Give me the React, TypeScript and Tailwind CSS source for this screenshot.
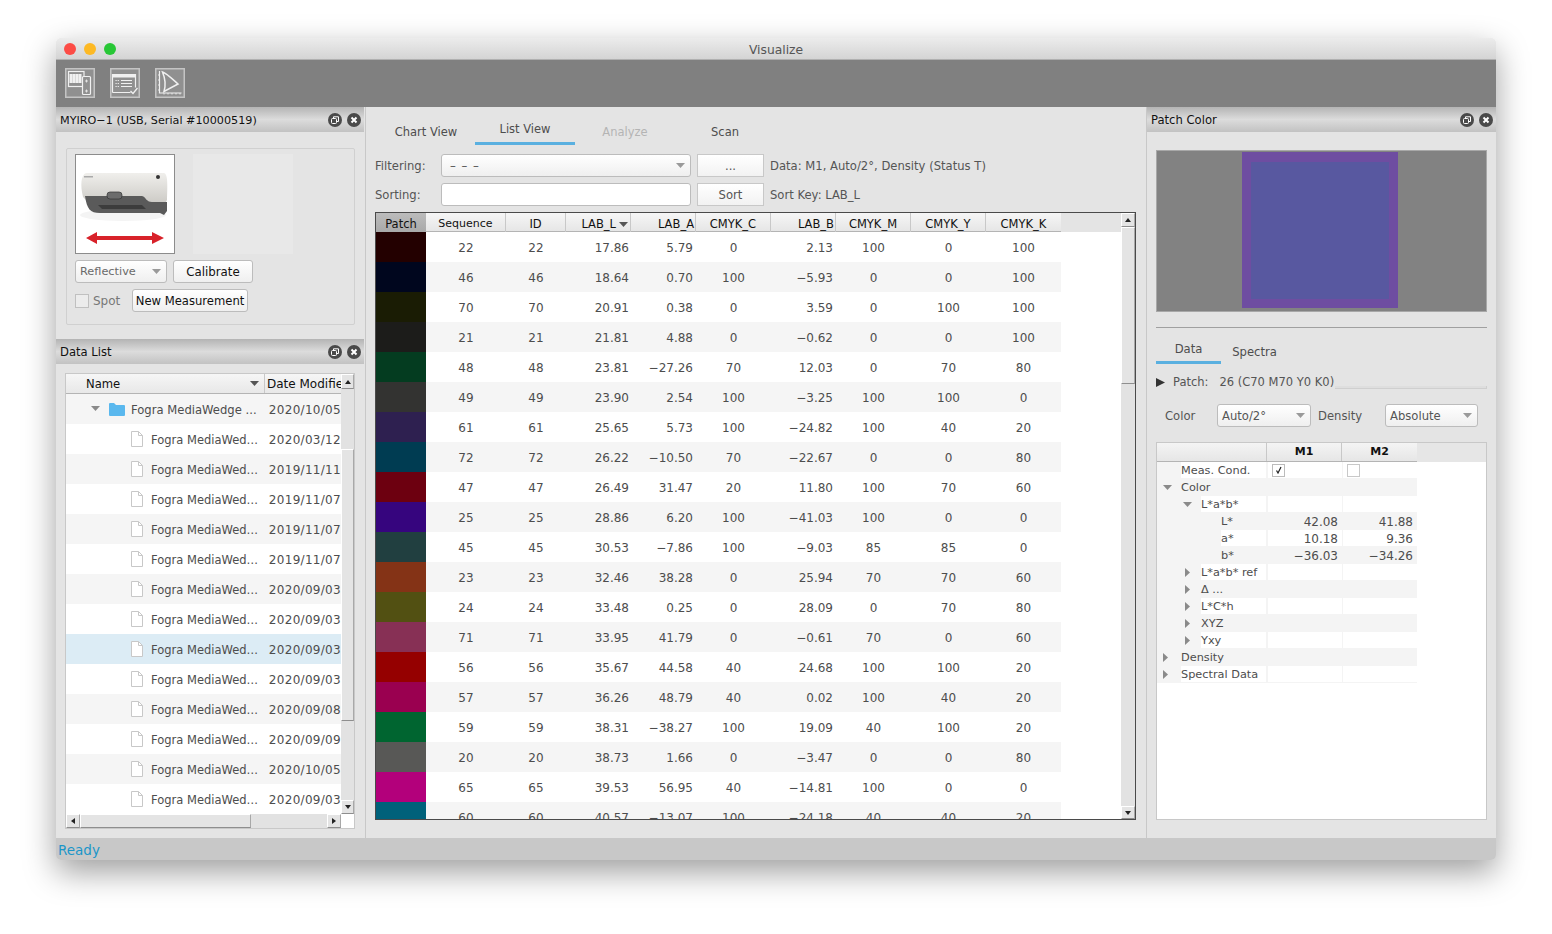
import React from "react";

const FONT = "[font-family:'DejaVu_Sans',sans-serif]";

const rows: string[][] = [
  ["#230000","22","22","17.86","5.79","0","2.13","100","0","100"],
  ["#00061e","46","46","18.64","0.70","100","−5.93","0","0","100"],
  ["#1a1c04","70","70","20.91","0.38","0","3.59","0","100","100"],
  ["#1c1c1a","21","21","21.81","4.88","0","−0.62","0","0","100"],
  ["#043c20","48","48","23.81","−27.26","70","12.03","0","70","80"],
  ["#333331","49","49","23.90","2.54","100","−3.25","100","100","0"],
  ["#2e2050","61","61","25.65","5.73","100","−24.82","100","40","20"],
  ["#003c52","72","72","26.22","−10.50","70","−22.67","0","0","80"],
  ["#6d0010","47","47","26.49","31.47","20","11.80","100","70","60"],
  ["#36057e","25","25","28.86","6.20","100","−41.03","100","0","0"],
  ["#213f40","45","45","30.53","−7.86","100","−9.03","85","85","0"],
  ["#843316","23","23","32.46","38.28","0","25.94","70","70","60"],
  ["#525012","24","24","33.48","0.25","0","28.09","0","70","80"],
  ["#873055","71","71","33.95","41.79","0","−0.61","70","0","60"],
  ["#950000","56","56","35.67","44.58","40","24.68","100","100","20"],
  ["#9a0050","57","57","36.26","48.79","40","0.02","100","40","20"],
  ["#006530","59","59","38.31","−38.27","100","19.09","40","100","20"],
  ["#585856","20","20","38.73","1.66","0","−3.47","0","0","80"],
  ["#b3007b","65","65","39.53","56.95","40","−14.81","100","0","0"],
  ["#00617a","60","60","40.57","−13.07","100","−24.18","40","40","20"],
];

const dates = ["2020/03/12","2019/11/11","2019/11/07","2019/11/07","2019/11/07","2020/09/03","2020/09/03","2020/09/03","2020/09/03","2020/09/08","2020/09/09","2020/10/05","2020/09/03"];

function PanelHeader({ title, size = "text-[11.6px]" }: { title: string; size?: string }) {
  return (
    <div className={`h-[25px] shrink-0 flex items-center justify-between pl-[4px] pr-[3px] bg-gradient-to-b from-[#b4b4b4] via-[#dcdcdc] to-[#c2c2c2] text-[#111] ${size}`}>
      <span className="pt-[3px]">{title}</span>
      <span className="flex items-center gap-[5px]">
        <svg width="14" height="14" viewBox="0 0 14 14">
          <circle cx="7" cy="7" r="7" fill="#4a4a4a" />
          <rect x="3.5" y="5.5" width="5" height="5" rx="1" fill="none" stroke="#fff" strokeWidth="1" />
          <path d="M5.5 5.5V3.8h5v4.7H8.5" fill="none" stroke="#fff" strokeWidth="1" />
        </svg>
        <svg width="14" height="14" viewBox="0 0 14 14">
          <circle cx="7" cy="7" r="7" fill="#4a4a4a" />
          <path d="M4.5 4.5l5 5M9.5 4.5l-5 5" stroke="#fff" strokeWidth="2" />
        </svg>
      </span>
    </div>
  );
}

function Caret({ color = "#8a8a8a" }: { color?: string }) {
  return (
    <svg width="9" height="5" viewBox="0 0 9 5" className="shrink-0">
      <path d="M0 0h9L4.5 5z" fill={color} />
    </svg>
  );
}

function CaretRight() {
  return (
    <svg width="5" height="9" viewBox="0 0 5 9" className="shrink-0">
      <path d="M0 0v9l5-4.5z" fill="#8a8a8a" />
    </svg>
  );
}

const bevel = "bg-[#e4e4e4] border-l border-t border-l-white border-t-white border-r border-b border-r-[#a8a8a8] border-b-[#8e8e8e]";

function ArrowBtn({ d, className }: { d: string; className: string }) {
  return (
    <div className={`flex items-center justify-center ${bevel} ${className}`}>
      <svg width="8" height="6" viewBox="0 0 8 6"><path d={d} fill="#222" /></svg>
    </div>
  );
}

const UP = "M1 5h6L4 1z";
const DOWN = "M1 1h6L4 5z";
const LEFT = "M6 0v6L2 3z";
const RIGHT = "M2 0v6l4-3z";

function Combo({ label, className, text = "text-[#555]" }: { label: React.ReactNode; className: string; text?: string }) {
  return (
    <div className={`flex items-center justify-between rounded-[3px] border border-[#bcbcbc] bg-gradient-to-b from-white to-[#efefef] pl-[4px] pr-[5px] ${text} ${className}`}>
      <span className="pt-[2px]">{label}</span>
      <Caret color="#9a9a9a" />
    </div>
  );
}

function FileIcon() {
  return (
    <svg width="12" height="16" viewBox="0 0 12 16" className="shrink-0">
      <path d="M.5.5h7l4 4v11H.5z" fill="#fff" stroke="#c8c8c8" />
      <path d="M7.5.5v4h4" fill="none" stroke="#c8c8c8" />
    </svg>
  );
}

function DeviceImage() {
  return (
    <div className="w-[100px] h-[100px] border border-[#8c8c8c] bg-white shrink-0">
      <svg width="98" height="98" viewBox="0 0 98 98">
        <defs>
          <linearGradient id="body" x1="0" y1="0" x2="0" y2="1">
            <stop offset="0" stopColor="#f0efec" />
            <stop offset="1" stopColor="#c9c7c2" />
          </linearGradient>
        </defs>
        <ellipse cx="47" cy="60" rx="43" ry="6" fill="#f4f4f4" />
        <path d="M7 42 C4 30 5 20 10 18 H88 C91 19 92 24 91 45 L88 51 H72 L68 45 H10 Z" fill="url(#body)" />
        <path d="M9 41 H66 C70 42 70 47 76 47 H91 L91 56 L88 60 L84 58 H24 C14 58 11 54 9 41 Z" fill="#5a5a5a" />
        <path d="M22 50 H66 L70 54 H26 Z" fill="#3c3c3c" />
        <rect x="31" y="37" width="15" height="7" rx="3" fill="#6c6c6c" stroke="#333" strokeWidth="0.7" />
        <circle cx="82" cy="22" r="2" fill="#333" />
        <rect x="8" y="21" width="9" height="1.5" fill="#aaa" />
        <path d="M10 83 L21 77 V81 H76 V77 L88 83 L76 89 V85 H21 V89 Z" fill="#d8222a" />
      </svg>
    </div>
  );
}

function Toolbar() {
  const s = "#f0f0f0";
  const frame = <rect x=".75" y=".75" width="28.5" height="28.5" fill="#909090" stroke="#c4c4c4" strokeWidth="1.5" />;
  const dots: React.ReactNode[] = [];
  for (let r = 0; r < 3; r++) for (let c = 0; c < 4; c++) dots.push(<rect key={`${r}${c}`} x={5 + c * 3} y={6.5 + r * 3} width="2" height="2" fill={s} />);
  return (
    <div className="h-[47px] shrink-0 bg-[#808080] flex items-center gap-[15px] pl-[9px] pb-[1px]">
      <svg width="30" height="30" viewBox="0 0 30 30" fill="none" stroke={s}>
        {frame}
        <rect x="3.5" y="3.500" width="15.500" height="15" strokeWidth="1.2" />
        {dots}
        <rect x="17.500" y="8.500" width="8" height="18" rx="1" fill="#909090" strokeWidth="1.2" />
        <path d="M21.500 11.500v3M20 13h3M20 23h3M21.500 21.500v3" strokeWidth=".8" />
      </svg>
      <svg width="30" height="30" viewBox="0 0 30 30" fill="none" stroke={s}>
        {frame}
        <path d="M2.500 24.500v-18h23v13" strokeWidth="1.2" />
        <path d="M2.500 24.500h18" strokeWidth="1.2" />
        <rect x="2.500" y="6" width="23" height="3.500" fill={s} stroke="none" />
        <path d="M5.500 12.500h3.500M5.500 15.500h3.500M5.500 18.500h3.500" strokeDasharray="1.200 1" />
        <path d="M11 12.500h11M11 15.500h11M11 18.500h11" />
        <path d="M20.500 23l2.500 2.500 4.500-5.500" strokeWidth="1.300" />
      </svg>
      <svg width="30" height="30" viewBox="0 0 30 30" fill="none" stroke={s}>
        {frame}
        <path d="M4.500 3v22h22" strokeWidth="1.200" />
        <path d="M4.500 7H3M4.500 12H3M4.500 17H3M4.500 22H3M9 25v1.500M13 25v1.500M17 25v1.500M21 25v1.500M25 25v1.500" strokeWidth=".9" />
        <path d="M7.500 4 C11 5 13 7 23 16 L9 23.500 C11 17 10 10 7.500 4Z" strokeWidth="1.500" />
      </svg>
    </div>
  );
}

function DevicePanel() {
  return (
    <div className="h-[207px] shrink-0 pt-[16px] pl-[10px] pr-[9px]">
      <div className="h-[177px] border border-[#d0d0d0] rounded-[2px] pl-[8px] pt-[5px]">
        <div className="flex gap-[18px]">
          <DeviceImage />
          <div className="w-[100px] h-[100px] bg-[#e8e8e8]" />
        </div>
        <div className="flex gap-[6px] mt-[6px] h-[23px]">
          <Combo label="Reflective" className="w-[92px] h-[23px] text-[11.300px]" text="text-[#6a6a6a]" />
          <div className="w-[80px] h-[23px] pt-[2px] rounded-[3px] border border-[#bcbcbc] bg-gradient-to-b from-white to-[#efefef] flex items-center justify-center text-[#111] text-[11.800px]">Calibrate</div>
        </div>
        <div className="flex items-center mt-[6px] h-[23px]">
          <div className="w-[14px] h-[14px] border border-[#c0c0c0] bg-[#ececec] shrink-0" />
          <span className="ml-[4px] w-[39px] text-[#777] text-[12px]">Spot</span>
          <div className="w-[116px] h-[23px] pt-[2px] rounded-[3px] border border-[#bcbcbc] bg-gradient-to-b from-white to-[#efefef] flex items-center justify-center text-[#111] text-[11.600px]">New Measurement</div>
        </div>
      </div>
    </div>
  );
}

function DataList() {
  return (
    <div className="flex-1 min-h-0 pt-[9px] pl-[9px] flex">
      <div className="w-[290px] h-[456px] border border-[#c8c8c8] bg-white flex flex-col">
        <div className="flex flex-1 min-h-0">
          <div className="w-[275px] flex flex-col overflow-hidden">
            <div className="h-[20px] shrink-0 flex border-b border-[#b4b4b4] bg-gradient-to-b from-[#f6f6f6] to-[#e8e8e8] text-[#111] text-[11.600px]">
              <div className="w-[199px] flex items-center justify-between pl-[20px] pr-[5px] border-r border-[#c8c8c8]">
                <span className="pt-[2px]">Name</span>
                <Caret color="#555" />
              </div>
              <div className="flex-1 pl-[2px] flex items-center whitespace-nowrap overflow-hidden text-[12px]">Date Modified</div>
            </div>
            <div className="h-[30px] shrink-0 flex items-center bg-[#f5f5f5] text-[#4d4d4d] text-[11.600px]">
              <div className="w-[199px] flex items-center pl-[25px] whitespace-nowrap">
                <Caret />
                <svg width="16" height="14" viewBox="0 0 16 14" className="ml-[9px] shrink-0">
                  <path d="M0 2a1 1 0 011-1h4l2 2h8a1 1 0 011 1v9a1 1 0 01-1 1H1a1 1 0 01-1-1z" fill="#5ab8ee" />
                </svg>
                <span className="ml-[6px] pt-[4px]">Fogra MediaWedge ...</span>
              </div>
              <span className="pl-[4px] pt-[2px] whitespace-nowrap text-[12px] tracking-[0.3px]">2020/10/05</span>
            </div>
            {dates.map((d, i) => (
              <div key={i} className={`h-[30px] shrink-0 flex items-center text-[#4d4d4d] text-[11.500px] ${i === 7 ? "bg-[#dcecf5]" : i % 2 === 0 ? "bg-white" : "bg-[#f5f5f5]"}`}>
                <div className="w-[199px] flex items-center pl-[65px] whitespace-nowrap">
                  <FileIcon />
                  <span className="ml-[8px] pt-[4px]">Fogra MediaWed…</span>
                </div>
                <span className="pl-[4px] pt-[2px] whitespace-nowrap text-[12px] tracking-[0.3px]">{d}</span>
              </div>
            ))}
          </div>
          <div className="w-[13px] flex flex-col bg-[#e2e2e2]">
            <ArrowBtn d={UP} className="h-[15px] shrink-0" />
            <div className="flex-1 flex flex-col">
              <div className="h-[60px]" />
              <div className={`h-[272px] ${bevel}`} />
            </div>
            <ArrowBtn d={DOWN} className="h-[14px] shrink-0" />
          </div>
        </div>
        <div className="h-[14px] shrink-0 flex bg-[#e2e2e2]">
          <ArrowBtn d={LEFT} className="w-[14px]" />
          <div className={`w-[171px] ${bevel}`} />
          <div className="flex-1" />
          <ArrowBtn d={RIGHT} className="w-[14px]" />
          <div className="w-[13px] bg-white" />
        </div>
      </div>
    </div>
  );
}

function CenterPanel() {
  const cols = "grid grid-cols-[50px_80px_60px_65px_65px_75px_65px_75px_75px_75px]";
  const n = "self-center pt-[2px]";
  return (
    <div className="w-[780px] shrink-0 flex flex-col pl-[9px] pr-[10px]">
      <div className="h-[38px] shrink-0 flex text-[11.500px]">
        <div className="w-[100px] pt-[17px] pl-[2px] text-center text-[#4d4d4d]">Chart View</div>
        <div className="w-[100px] pt-[14px] text-center text-[#4d4d4d] border-b-[3px] border-[#5ab0e0]">List View</div>
        <div className="w-[100px] pt-[17px] text-center text-[#b4b4b4]">Analyze</div>
        <div className="w-[100px] pt-[17px] text-center text-[#4d4d4d]">Scan</div>
      </div>
      <div className="h-[23px] mt-[9px] flex items-center text-[11.600px] text-[#555]">
        <span className="w-[66px] pt-[2px]">Filtering:</span>
        <Combo label={<span className="pl-[4px] tracking-[1px]">– – –</span>} className="w-[250px] h-[23px]" />
        <div className="w-[67px] h-[23px] ml-[6px] pt-[2px] border border-[#c8c8c8] bg-gradient-to-b from-white to-[#f2f2f2] flex items-center justify-center">...</div>
        <span className="ml-[6px] pt-[2px]">Data: M1, Auto/2°, Density (Status T)</span>
      </div>
      <div className="h-[23px] mt-[6px] flex items-center text-[11.600px] text-[#555]">
        <span className="w-[66px] pt-[2px]">Sorting:</span>
        <div className="w-[250px] h-[23px] rounded-[3px] border border-[#bcbcbc] bg-white" />
        <div className="w-[67px] h-[23px] ml-[6px] pt-[2px] border border-[#c8c8c8] bg-gradient-to-b from-white to-[#f2f2f2] flex items-center justify-center">Sort</div>
        <span className="ml-[6px] pt-[2px]">Sort Key: LAB_L</span>
      </div>
      <div className="h-[608px] mt-[6px] border border-[#4a4a4a] bg-white flex overflow-hidden text-[12px]">
        <div className="flex-1 min-w-0 flex flex-col overflow-hidden">
          <div className="h-[19px] shrink-0 bg-[#e4e4e4]">
            <div className={`${cols} h-[19px] w-[685px] text-[#111] text-[11.500px] bg-gradient-to-b from-[#f6f6f6] to-[#e6e6e6] border-b border-[#b4b4b4]`}>
              <div className="bg-gradient-to-b from-[#bcbcbc] to-[#a8a8a8] flex items-center justify-center pt-[3px]">Patch</div>
              <div className="flex items-center justify-center pt-[3px] border-r border-[#c8c8c8] text-[11px]">Sequence</div>
              <div className="flex items-center justify-center pt-[3px] border-r border-[#c8c8c8]">ID</div>
              <div className="flex items-center justify-end gap-[3px] pt-[3px] pr-[2px] border-r border-[#c8c8c8]">LAB_L<Caret color="#555" /></div>
              <div className="flex items-center justify-end pt-[3px] pr-[1px] border-r border-[#c8c8c8]">LAB_A</div>
              <div className="flex items-center justify-center pt-[3px] border-r border-[#c8c8c8]">CMYK_C</div>
              <div className="flex items-center justify-end pt-[3px] pr-[1px] border-r border-[#c8c8c8]">LAB_B</div>
              <div className="flex items-center justify-center pt-[3px] border-r border-[#c8c8c8]">CMYK_M</div>
              <div className="flex items-center justify-center pt-[3px] border-r border-[#c8c8c8]">CMYK_Y</div>
              <div className="flex items-center justify-center pt-[3px]">CMYK_K</div>
            </div>
          </div>
          {rows.map((r, i) => (
            <div key={i} className={`${cols} h-[30px] shrink-0 w-[685px] text-[#4d4d4d] ${i % 2 === 0 ? "bg-white" : "bg-[#f5f5f5]"}`}>
              <div style={{ backgroundColor: r[0] }} />
              <div className={`${n} text-center`}>{r[1]}</div>
              <div className={`${n} text-center`}>{r[2]}</div>
              <div className={`${n} text-right pr-[2px]`}>{r[3]}</div>
              <div className={`${n} text-right pr-[3px]`}>{r[4]}</div>
              <div className={`${n} text-center`}>{r[5]}</div>
              <div className={`${n} text-right pr-[3px]`}>{r[6]}</div>
              <div className={`${n} text-center`}>{r[7]}</div>
              <div className={`${n} text-center`}>{r[8]}</div>
              <div className={`${n} text-center`}>{r[9]}</div>
            </div>
          ))}
        </div>
        <div className="w-[14px] shrink-0 flex flex-col bg-[#e2e2e2]">
          <ArrowBtn d={UP} className="h-[14px] shrink-0" />
          <div className="flex-1">
            <div className={`h-[157px] ${bevel}`} />
          </div>
          <ArrowBtn d={DOWN} className="h-[13px] shrink-0" />
        </div>
      </div>
    </div>
  );
}

type TreeRow = { indent: number; arrow?: "down" | "right"; label: string; m1?: string; m2?: string; check?: boolean };
const tree: TreeRow[] = [
  { indent: 0, label: "Meas. Cond.", check: true },
  { indent: 0, arrow: "down", label: "Color" },
  { indent: 1, arrow: "down", label: "L*a*b*" },
  { indent: 2, label: "L*", m1: "42.08", m2: "41.88" },
  { indent: 2, label: "a*", m1: "10.18", m2: "9.36" },
  { indent: 2, label: "b*", m1: "−36.03", m2: "−34.26" },
  { indent: 1, arrow: "right", label: "L*a*b* ref" },
  { indent: 1, arrow: "right", label: "Δ ..." },
  { indent: 1, arrow: "right", label: "L*C*h" },
  { indent: 1, arrow: "right", label: "XYZ" },
  { indent: 1, arrow: "right", label: "Yxy" },
  { indent: 0, arrow: "right", label: "Density" },
  { indent: 0, arrow: "right", label: "Spectral Data" },
];

function RightPanel() {
  return (
    <div className="flex-1 min-w-0 flex flex-col border-l border-[#c8c8c8]">
      <PanelHeader title="Patch Color" />
      <div className="flex-1 min-h-0 px-[9px] flex flex-col">
        <div className="h-[162px] mt-[18px] shrink-0 bg-[#828282] border border-[#a8a8a8] flex justify-center pt-[1px]">
          <div className="w-[156px] h-[156px] bg-[#6e4da1] flex justify-center pt-[10px] mr-[3px]">
            <div className="w-[138px] h-[137px] bg-[#5858a0]" />
          </div>
        </div>
        <div className="h-[1px] mt-[15px] shrink-0 bg-[#a0a0a0]" />
        <div className="flex h-[36px] shrink-0 text-[11.600px] text-[#4d4d4d]">
          <div className="w-[65px] pt-[13px] text-center border-b-[3px] border-[#5ab0e0]">Data</div>
          <div className="w-[67px] pt-[16px] text-center">Spectra</div>
        </div>
        <div className="h-[18px] mt-[9px] shrink-0 flex items-center text-[11.500px] text-[#555]">
          <svg width="9" height="9" viewBox="0 0 9 9" className="shrink-0"><path d="M0 0v9l9-4.500z" fill="#333" /></svg>
          <span className="ml-[8px] pt-[2px]">Patch:</span>
          <span className="ml-[11px] pt-[2px] whitespace-nowrap">26 (C70 M70 Y0 K0)</span>
          <div className="flex-1 h-[3px] self-end ml-[1px] mb-[2px] border-b border-r border-[#cfcfcf] bg-[#dedede]" />
        </div>
        <div className="h-[23px] mt-[13px] shrink-0 flex items-center text-[11.600px] text-[#555]">
          <span className="w-[61px] pl-[9px] pt-[2px]">Color</span>
          <Combo label="Auto/2°" className="w-[94px] h-[23px]" />
          <span className="ml-[7px] w-[67px] pt-[2px]">Density</span>
          <Combo label="Absolute" className="w-[93px] h-[23px]" />
        </div>
        <div className="h-[378px] mt-[15px] shrink-0 border border-[#c8c8c8] bg-white text-[11.300px]">
          <div className="h-[19px] flex bg-[#e6e6e6] text-[#111]">
            <div className="w-[260px] flex border-b border-[#b4b4b4] bg-gradient-to-b from-[#f4f4f4] to-[#e6e6e6]">
              <div className="w-[110px] border-r border-[#c8c8c8]" />
              <div className="w-[75px] border-r border-[#c8c8c8] flex items-center justify-center font-bold text-[11px]">M1</div>
              <div className="w-[75px] flex items-center justify-center font-bold text-[11px]">M2</div>
            </div>
          </div>
          {tree.map((t, i) => {
            const cell = i % 2 === 0 ? "bg-white" : "bg-[#f4f4f4]";
            const arrowPad = t.indent === 0 ? "w-[24px] pl-[6px]" : t.indent === 1 ? (t.arrow === "down" ? "w-[44px] pl-[26px]" : "w-[44px] pl-[28px]") : "w-[64px]";
            return (
              <div key={i} className="w-[260px] h-[17px] flex text-[#4d4d4d] bg-[#f4f4f4]">
                <div className="w-[109px] h-[16px] flex items-center whitespace-nowrap">
                  <span className={`flex items-center ${arrowPad}`}>
                    {t.arrow === "down" && <Caret />}
                    {t.arrow === "right" && <CaretRight />}
                  </span>
                  <span className={`flex-1 h-[16px] flex items-center pt-[3px] ${cell}`}>{t.label}</span>
                </div>
                <div className={`w-[74px] h-[16px] ml-[2px] flex items-center justify-end pr-[4px] text-[12px] ${cell}`}>
                  {t.check ? (
                    <div className="w-[13px] h-[13px] mr-[53px] bg-white border border-[#bcbcbc] flex items-center justify-center">
                      <svg width="8" height="8" viewBox="0 0 8 8"><path d="M1.500 4.500L3 7l3-6" fill="none" stroke="#222" strokeWidth="1.200" /></svg>
                    </div>
                  ) : <span className="pt-[1px]">{t.m1}</span>}
                </div>
                <div className={`w-[74px] h-[16px] ml-[1px] flex items-center justify-end pr-[4px] text-[12px] ${cell}`}>
                  {t.check ? <div className="w-[13px] h-[13px] mr-[53px] bg-white border border-[#c8c8c8]" /> : <span className="pt-[1px]">{t.m2}</span>}
                </div>
              </div>
            );
          })}
        </div>
      </div>
    </div>
  );
}

export default function App() {
  return (
    <div className={`w-[1552px] h-[934px] bg-white pt-[38px] pl-[56px] overflow-hidden ${FONT}`}>
      <div className="w-[1440px] h-[822px] flex flex-col rounded-t-[6px] rounded-b-[5px] overflow-hidden bg-[#e4e4e4] shadow-[0_12px_32px_rgba(0,0,0,0.38)]">
        <div className="h-[22px] shrink-0 flex items-center bg-gradient-to-b from-[#ececec] to-[#d4d4d4] border-b border-[#b0b0b0]">
          <div className="flex gap-[8px] pl-[8px] w-[200px]">
            <span className="w-[12px] h-[12px] rounded-full bg-[#fc4c46]" />
            <span className="w-[12px] h-[12px] rounded-full bg-[#fdb924]" />
            <span className="w-[12px] h-[12px] rounded-full bg-[#28c736]" />
          </div>
          <div className="flex-1 pr-[200px] pt-[4px] text-center text-[12.300px] text-[#555]">Visualize</div>
        </div>
        <Toolbar />
        <div className="flex flex-1 min-h-0">
          <div className="w-[310px] shrink-0 flex flex-col border-r border-[#c8c8c8] pr-[1px]">
            <PanelHeader title="MYIRO−1 (USB, Serial #10000519)" size="text-[11.200px]" />
            <DevicePanel />
            <PanelHeader title="Data List" />
            <DataList />
          </div>
          <CenterPanel />
          <RightPanel />
        </div>
        <div className="h-[22px] shrink-0 bg-[#c8c8c8] flex items-center pl-[2px] pt-[2px] text-[13.500px] text-[#1a96c8]">Ready</div>
      </div>
    </div>
  );
}
